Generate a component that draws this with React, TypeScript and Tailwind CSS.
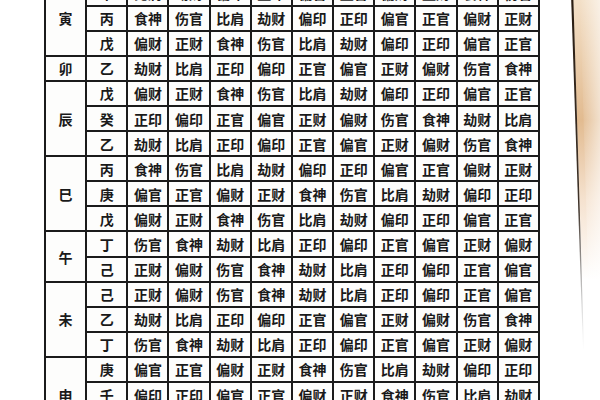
const GODS: Record<string, string[]> = {
  甲: ['比肩', '劫财', '偏印', '正印', '偏官', '正官', '偏财', '正财', '食神', '伤官'],
  乙: ['劫财', '比肩', '正印', '偏印', '正官', '偏官', '正财', '偏财', '伤官', '食神'],
  丙: ['食神', '伤官', '比肩', '劫财', '偏印', '正印', '偏官', '正官', '偏财', '正财'],
  丁: ['伤官', '食神', '劫财', '比肩', '正印', '偏印', '正官', '偏官', '正财', '偏财'],
  戊: ['偏财', '正财', '食神', '伤官', '比肩', '劫财', '偏印', '正印', '偏官', '正官'],
  己: ['正财', '偏财', '伤官', '食神', '劫财', '比肩', '正印', '偏印', '正官', '偏官'],
  庚: ['偏官', '正官', '偏财', '正财', '食神', '伤官', '比肩', '劫财', '偏印', '正印'],
  壬: ['偏印', '正印', '偏官', '正官', '偏财', '正财', '食神', '伤官', '比肩', '劫财'],
  癸: ['正印', '偏印', '正官', '偏官', '正财', '偏财', '伤官', '食神', '劫财', '比肩'],
};

const BRANCHES: { branch: string; stems: string[] }[] = [
  { branch: '寅', stems: ['甲', '丙', '戊'] },
  { branch: '卯', stems: ['乙'] },
  { branch: '辰', stems: ['戊', '癸', '乙'] },
  { branch: '巳', stems: ['丙', '庚', '戊'] },
  { branch: '午', stems: ['丁', '己'] },
  { branch: '未', stems: ['己', '乙', '丁'] },
  { branch: '申', stems: ['庚', '壬', '戊'] },
];

const SPAN: Record<number, string> = { 1: 'row-span-1', 2: 'row-span-2', 3: 'row-span-3' };

const cell = 'flex items-center justify-center bg-[#fdfdfc]';

// photo edge of the book page, right of the table
const PageEdge = () => (
  <svg width="60" height="400" viewBox="0 0 60 400" className="block">
    <defs>
      <linearGradient id="wood" x1="0" y1="0" x2="0" y2="1">
        <stop offset="0" stopColor="#f3e0c8" />
        <stop offset="0.3" stopColor="#e2bb90" />
        <stop offset="0.5" stopColor="#f5e2cf" />
        <stop offset="0.7" stopColor="#ffffff" />
        <stop offset="1" stopColor="#ffffff" />
      </linearGradient>
      <linearGradient id="edge" x1="0" y1="0" x2="0" y2="1">
        <stop offset="0" stopColor="#2a1d12" stopOpacity="1" />
        <stop offset="0.6" stopColor="#2a1d12" stopOpacity="0.9" />
        <stop offset="0.87" stopColor="#555" stopOpacity="0.25" />
        <stop offset="1" stopColor="#888" stopOpacity="0" />
      </linearGradient>
      <linearGradient id="fade" x1="0" y1="0" x2="1" y2="0">
        <stop offset="0" stopColor="#ffffff" stopOpacity="0" />
        <stop offset="1" stopColor="#ffffff" stopOpacity="0.55" />
      </linearGradient>
    </defs>
    <rect x="0" y="0" width="60" height="400" fill="#ffffff" />
    <polygon points="33,0 60,0 60,400 46,400" fill="url(#wood)" />
    <polygon points="40,0 60,0 60,400 52,400" fill="url(#fade)" />
    <polygon points="31.2,0 33.4,0 44,350 43,350" fill="url(#edge)" />
  </svg>
);

export default function App() {
  return (
    <div className="w-[600px] h-[400px] overflow-hidden bg-white flex">
      <div className="w-[44px] shrink-0" />
      <div className="-mt-[20.5px] shrink-0">
        <div className="grid grid-cols-[repeat(12,39.17px)] auto-rows-[23.1px] gap-[2px] p-[2px] bg-[#1b1b1b] text-[14px] leading-none font-semibold text-[#1a1a1a] font-['Noto_Sans_CJK_SC',sans-serif]">
          {BRANCHES.map(({ branch, stems }) => [
            <div key={branch} className={`${cell} ${SPAN[stems.length]}`}>
              {branch}
            </div>,
            ...stems.flatMap((stem, i) => [
              <div key={`${branch}-${i}`} className={cell}>
                {stem}
              </div>,
              ...GODS[stem].map((god, j) => (
                <div key={`${branch}-${i}-${j}`} className={cell}>
                  {god}
                </div>
              )),
            ]),
          ])}
        </div>
      </div>
      <div className="flex-1" />
      <PageEdge />
    </div>
  );
}
